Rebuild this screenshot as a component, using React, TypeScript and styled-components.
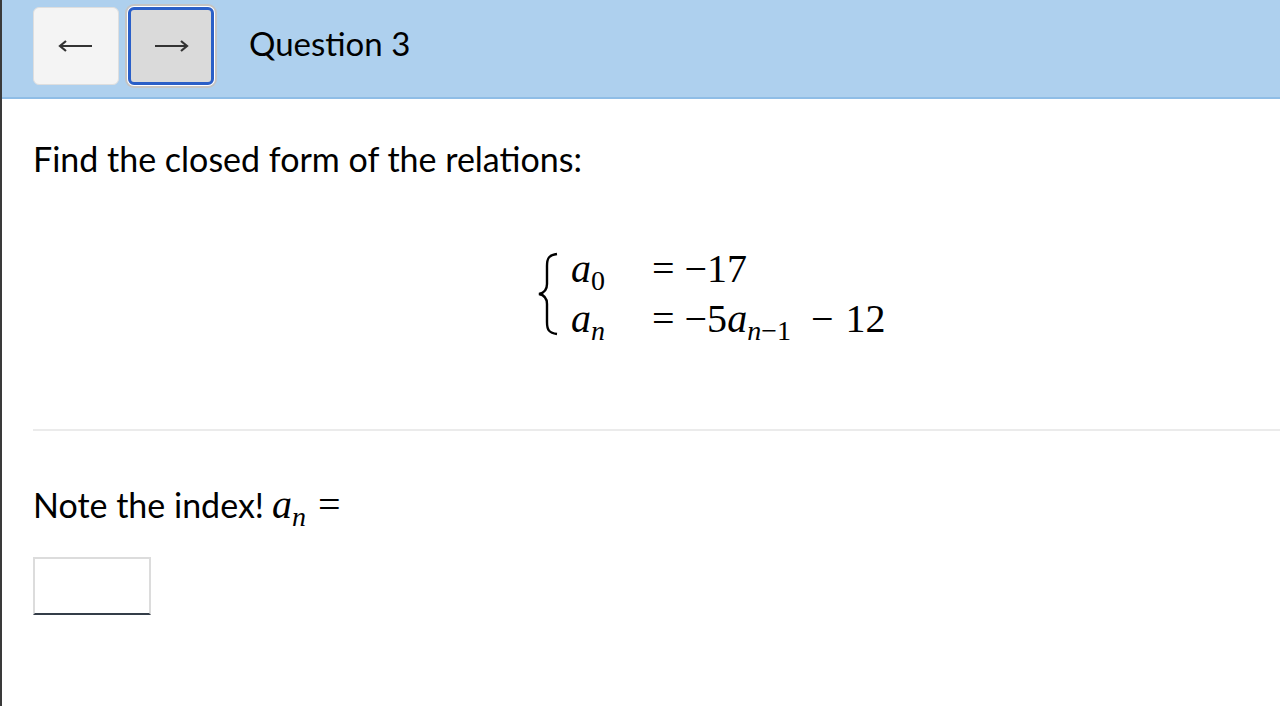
import React from "react";
import styled, { createGlobalStyle } from "styled-components";

const Global = createGlobalStyle`
  html, body { margin: 0; padding: 0; background: #fff; }
  body { font-family: "Lato", "Noto Sans", sans-serif; color: #000; }
`;

const Page = styled.div`
  min-height: 706px;
  border-left: 2px solid #3a3a3a;
  box-sizing: border-box;
`;

const Header = styled.header`
  height: 97px;
  background: #aed0ee;
  border-bottom: 2px solid #8fbde6;
  display: flex;
  align-items: center;
  padding-left: 31px;
  box-sizing: content-box;
`;

const NavButton = styled.button<{ $focused?: boolean }>`
  width: 86px;
  height: 78px;
  margin-right: ${(p) => (p.$focused ? "35px" : "9px")};
  border-radius: 6px;
  border: ${(p) => (p.$focused ? "3px solid #2a5fc8" : "1px solid #dedede")};
  box-shadow: ${(p) => (p.$focused ? "0 0 0 1px #fff, 0 0 0 3px #c4c4c4" : "none")};
  background: ${(p) => (p.$focused ? "#dadada" : "#f4f4f4")};
  display: flex;
  align-items: center;
  justify-content: center;
  padding: 0;
  box-sizing: border-box;
  margin-top: -6px;
`;

const Arrow = styled.svg`
  width: 36px;
  height: 14px;
`;

const Title = styled.h1`
  margin: 0;
  margin-top: -12px;
  font-family: "Lato", sans-serif;
  font-weight: 400;
  font-size: 33px;
  color: #000;
`;

const Content = styled.main`
  padding: 40px 0 0 31px;
`;

const Prompt = styled.p`
  margin: 0;
  font-size: 34px;
  line-height: 40px;
`;

const MathBlock = styled.div`
  margin: 72px 0 0 504px;
  display: flex;
  align-items: center;
  font-family: "Liberation Serif", "DejaVu Serif", serif;
  font-size: 40px;
  height: 86px;
`;

const Brace = styled.svg`
  width: 22px;
  height: 84px;
  margin-right: 12px;
`;

const Rows = styled.div`
  display: grid;
  grid-template-columns: 81px auto;
  row-gap: 6px;
  line-height: 44px;
`;

const Var = styled.span`
  font-style: italic;
`;

const Sub = styled.sub`
  font-size: 0.7em;
  vertical-align: -0.28em;
  line-height: 0;
`;

const Op = styled.span<{ $l?: number; $r?: number }>`
  margin-left: ${(p) => p.$l ?? 0}px;
  margin-right: ${(p) => p.$r ?? 0}px;
`;

const Rule = styled.hr`
  margin: 92px 0 0 0;
  border: none;
  border-top: 2px solid #ebebeb;
`;

const Note = styled.p`
  margin: 54px 0 0 0;
  font-size: 34px;
  line-height: 40px;
  display: flex;
  align-items: baseline;
  gap: 8px;
`;

const InlineMath = styled.span`
  font-family: "Liberation Serif", "DejaVu Serif", serif;
  font-size: 40px;
`;

const Answer = styled.input`
  display: block;
  margin-top: 32px;
  width: 118px;
  height: 58px;
  box-sizing: border-box;
  border: 2px solid #dcdcdc;
  border-bottom: 2px solid #343d48;
  background: #fff;
  outline: none;
`;

export default function App() {
  return (
    <>
      <Global />
      <Page>
        <Header>
          <NavButton aria-label="Previous">
            <Arrow viewBox="0 0 36 14">
              <path d="M2 7 H34 M8 2 L2 7 L8 12" fill="none" stroke="#333" strokeWidth="2.2" />
            </Arrow>
          </NavButton>
          <NavButton $focused aria-label="Next">
            <Arrow viewBox="0 0 36 14">
              <path d="M2 7 H34 M28 2 L34 7 L28 12" fill="none" stroke="#333" strokeWidth="2.2" />
            </Arrow>
          </NavButton>
          <Title>Question 3</Title>
        </Header>
        <Content>
          <Prompt>Find the closed form of the relations:</Prompt>
          <MathBlock>
            <Brace viewBox="0 0 22 84">
              <path
                d="M20 2 C12 3 10 6 10 14 L10 32 C10 38 7 41 2 42 C7 43 10 46 10 52 L10 70 C10 78 12 81 20 82"
                fill="none"
                stroke="#000"
                strokeWidth="2.4"
              />
            </Brace>
            <Rows>
              <span>
                <Var>a</Var>
                <Sub>0</Sub>
              </span>
              <span>
                <Op $r={10}>=</Op>−17
              </span>
              <span>
                <Var>a</Var>
                <Sub>
                  <Var>n</Var>
                </Sub>
              </span>
              <span>
                <Op $r={10}>=</Op>−5<Var>a</Var>
                <Sub>
                  <Var>n</Var>−1
                </Sub>
                <Op $l={20} $r={12}>−</Op>12
              </span>
            </Rows>
          </MathBlock>
          <Rule />
          <Note>
            <span>Note the index!</span>
            <InlineMath>
              <Var>a</Var>
              <Sub>
                <Var>n</Var>
              </Sub>
              <Op $l={12}>=</Op>
            </InlineMath>
          </Note>
          <Answer type="text" aria-label="answer" />
        </Content>
      </Page>
    </>
  );
}
